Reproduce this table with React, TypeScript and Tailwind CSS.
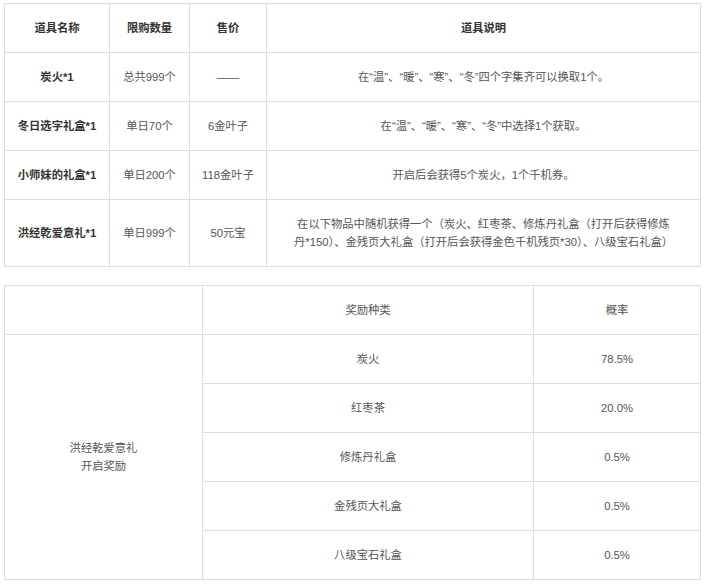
import React from 'react';

const items = [
  { name: '炭火*1', limit: '总共999个', price: '——', desc: '在“温”、“暖”、“寒”、“冬”四个字集齐可以换取1个。' },
  { name: '冬日选字礼盒*1', limit: '单日70个', price: '6金叶子', desc: '在“温”、“暖”、“寒”、“冬”中选择1个获取。' },
  { name: '小师妹的礼盒*1', limit: '单日200个', price: '118金叶子', desc: '开启后会获得5个炭火，1个千机券。' },
];

const rewards = [
  { name: '炭火', rate: '78.5%' },
  { name: '红枣茶', rate: '20.0%' },
  { name: '修炼丹礼盒', rate: '0.5%' },
  { name: '金残页大礼盒', rate: '0.5%' },
  { name: '八级宝石礼盒', rate: '0.5%' },
];

const cell = 'border border-[#dddddd] px-[8px] py-[15px] text-center align-middle';

export default function App() {
  return (
    <div
      className="min-h-[586px] bg-white pl-[4px] pt-[3px] text-[11.3px] leading-[18px] text-[#555]"
      style={{ fontFamily: '"Liberation Sans", "Noto Sans CJK SC", sans-serif' }}
    >
      {/* 道具表 */}
      <table className="w-[696px] table-fixed border-collapse">
        <colgroup>
          <col className="w-[105px]" />
          <col className="w-[80px]" />
          <col className="w-[77px]" />
          <col className="w-[434px]" />
        </colgroup>
        <thead>
          <tr className="font-bold text-[#333]">
            <th className={cell}>道具名称</th>
            <th className={cell}>限购数量</th>
            <th className={cell}>售价</th>
            <th className={cell}>道具说明</th>
          </tr>
        </thead>
        <tbody>
          {items.map((item) => (
            <tr key={item.name}>
              <td className={`${cell} font-bold text-[#333]`}>{item.name}</td>
              <td className={cell}>{item.limit}</td>
              <td className={cell}>{item.price}</td>
              <td className={cell}>{item.desc}</td>
            </tr>
          ))}
          <tr>
            <td className={`${cell} font-bold text-[#333]`}>洪经乾爱意礼*1</td>
            <td className={cell}>单日999个</td>
            <td className={cell}>50元宝</td>
            <td className={cell}>
              在以下物品中随机获得一个（炭火、红枣茶、修炼丹礼盒（打开后获得修炼
              <br />
              丹*150）、金残页大礼盒（打开后会获得金色千机残页*30）、八级宝石礼盒）
            </td>
          </tr>
        </tbody>
      </table>

      {/* 奖励概率 */}
      <table className="mt-[18px] w-[696px] table-fixed border-collapse">
        <colgroup>
          <col className="w-[198px]" />
          <col className="w-[331px]" />
          <col className="w-[167px]" />
        </colgroup>
        <tbody>
          <tr>
            <td className={cell}></td>
            <td className={cell}>奖励种类</td>
            <td className={cell}>概率</td>
          </tr>
          {rewards.map((r, i) => (
            <tr key={r.name}>
              {i === 0 && (
                <td rowSpan={rewards.length} className={cell}>
                  洪经乾爱意礼
                  <br />
                  开启奖励
                </td>
              )}
              <td className={cell}>{r.name}</td>
              <td className={cell}>{r.rate}</td>
            </tr>
          ))}
        </tbody>
      </table>
    </div>
  );
}
